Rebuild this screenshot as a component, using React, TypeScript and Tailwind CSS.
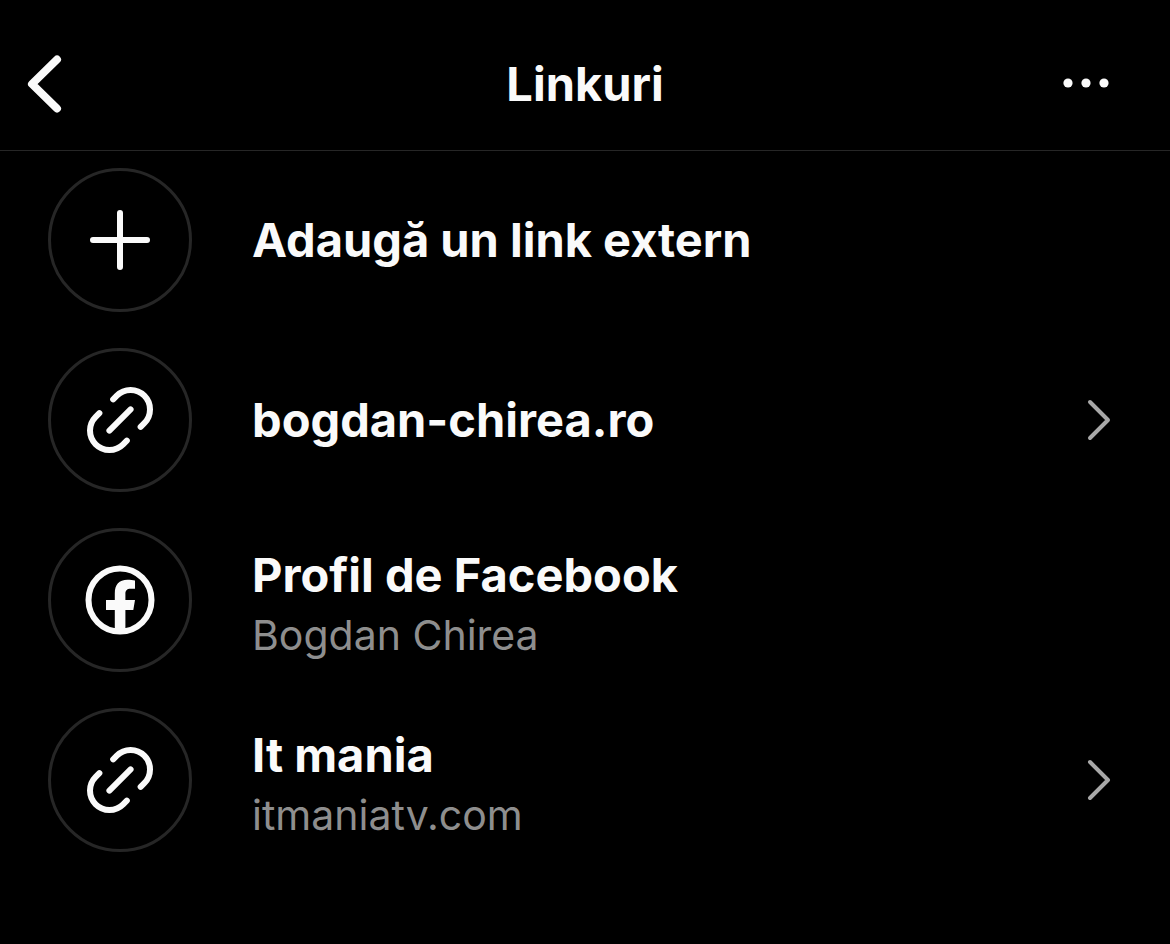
import React from 'react';

type IconName = 'plus' | 'link' | 'facebook';

interface LinkItem {
  title: string;
  subtitle?: string;
  icon: IconName;
  chevron?: boolean;
}

const items: LinkItem[] = [
  { title: 'Adaugă un link extern', icon: 'plus' },
  { title: 'bogdan-chirea.ro', icon: 'link', chevron: true },
  { title: 'Profil de Facebook', subtitle: 'Bogdan Chirea', icon: 'facebook' },
  { title: 'It mania', subtitle: 'itmaniatv.com', icon: 'link', chevron: true },
];

export default function App() {
  return (
    <div className="min-h-screen bg-black font-['Inter',sans-serif] text-[#fafafa]">
      {/* Header */}
      <header className="grid grid-cols-[1fr_auto_1fr] items-center border-b border-[#262626] px-6 pt-12 pb-[30px]">
        <button type="button" aria-label="Înapoi" className="justify-self-start">
          <svg className="h-[72px] w-10" viewBox="0 0 40 72" fill="none" stroke="currentColor">
            <path strokeLinecap="round" strokeLinejoin="round" strokeWidth={8} d="M33 11.5L8 36l25 24.5" />
          </svg>
        </button>
        <h1 className="text-[47px] leading-[72px] font-bold">Linkuri</h1>
        <button type="button" aria-label="Mai multe opțiuni" className="justify-self-end">
          <svg className="h-[72px] w-[120px]" viewBox="0 0 120 72" fill="currentColor">
            <circle cx="42" cy="35" r="4.6" />
            <circle cx="60" cy="35" r="4.6" />
            <circle cx="78" cy="35" r="4.6" />
          </svg>
        </button>
      </header>

      {/* Links */}
      <ul className="flex flex-col gap-9 px-12 pt-[17px] pb-12">
        {items.map((item) => (
          <li key={item.title}>
            <LinkRow item={item} />
          </li>
        ))}
      </ul>
    </div>
  );
}

function LinkRow({ item }: { item: LinkItem }) {
  return (
    <button type="button" className="flex w-full items-center text-left">
      <span className="flex size-36 shrink-0 items-center justify-center rounded-full border-3 border-[#262626]">
        <RowIcon name={item.icon} />
      </span>
      <span className={`ml-[60px] flex min-w-0 flex-1 flex-col ${item.subtitle ? 'pt-[10px]' : ''}`}>
        <span className="text-[47px] leading-[60px] font-bold">{item.title}</span>
        {item.subtitle && (
          <span className="text-[41px] leading-[60px] text-[#8e8e8e]">{item.subtitle}</span>
        )}
      </span>
      {item.chevron && (
        <svg className="h-12 w-9 shrink-0" viewBox="0 0 36 48" fill="none" stroke="#a8a8a8">
          <path strokeLinecap="round" strokeLinejoin="round" strokeWidth={4} d="M4 6l18 18L4 42" />
        </svg>
      )}
    </button>
  );
}

function RowIcon({ name }: { name: IconName }) {
  if (name === 'plus') {
    return (
      <svg className="size-[72px]" viewBox="0 0 72 72" fill="none" stroke="currentColor">
        <path strokeLinecap="round" strokeWidth={6} d="M36 9v54M9 36h54" />
      </svg>
    );
  }

  if (name === 'facebook') {
    return (
      <svg className="size-[72px]" viewBox="0 0 72 72" fill="none">
        <circle cx="36" cy="36" r="31.5" stroke="currentColor" strokeWidth={6} />
        <path
          fill="currentColor"
          d="M30.8 66V46H22V36h8.8v-6.5c0-9 4.2-13.7 12.7-13.7 2.6 0 5.5.3 7.5.7v8.3h-4.2c-4.2 0-5.4 1.9-5.4 5.3V36H51l-1.7 10h-7.9v20z"
        />
      </svg>
    );
  }

  return (
    <svg className="size-[72px]" viewBox="0 0 24 24" fill="none" stroke="currentColor">
      <g strokeLinecap="round" strokeWidth={2}>
        <path d="M9.726 5.123l1.228-1.228a6.47 6.47 0 0 1 9.15 9.152l-1.227 1.227" />
        <path d="M14.274 18.877l-1.228 1.228a6.47 6.47 0 0 1-9.15-9.152l1.227-1.227" />
        <path d="M8.471 15.529l7.058-7.058" />
      </g>
    </svg>
  );
}
